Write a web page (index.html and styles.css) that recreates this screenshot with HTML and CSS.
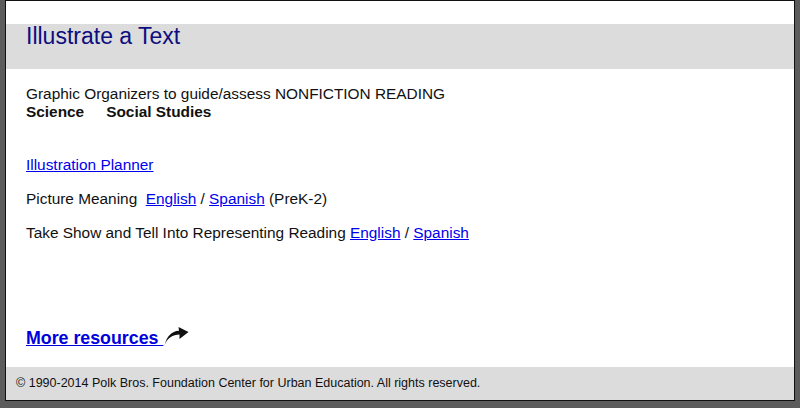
FILE: index.html
```html
<!DOCTYPE html>
<html>
<head>
<meta charset="utf-8">
<link rel="stylesheet" href="styles.css">
</head>
<body>
<div class="frame">
  <div class="top-space"></div>
  <div class="header"><h1 class="title">Illustrate a Text</h1></div>
  <div class="content">
    <div class="intro">
      <div>Graphic Organizers to guide/assess NONFICTION READING</div>
      <div class="subjects"><span class="subj">Science</span><span class="subj">Social Studies</span></div>
    </div>
    <p class="item"><a href="#">Illustration Planner</a></p>
    <p class="item">Picture Meaning&nbsp; <a href="#">English</a> / <a href="#">Spanish</a> (PreK-2)</p>
    <p class="item">Take Show and Tell Into Representing Reading <a href="#">English</a> / <a href="#">Spanish</a></p>
    <div class="more"><a href="#" class="more-link">More resources </a><svg class="arrow" width="25" height="19" viewBox="0 0 25 19"><path d="M0.5 18.5 C3 11 9 7.5 15.5 7.5 L15.5 12 L24.5 5 L14.5 0 L15 3.8 C7.5 4 2.5 10 0.5 18.5 Z" fill="#111"/></svg></div>
  </div>
  <div class="footer">© 1990-2014 Polk Bros. Foundation Center for Urban Education. All rights reserved.</div>
</div>
</body>
</html>
```
FILE: styles.css
```css
html, body {
  margin: 0;
  padding: 0;
  background: #5c5c5c;
}
body {
  font-family: "Liberation Sans", Arial, sans-serif;
  width: 800px;
  height: 408px;
  overflow: hidden;
}
.frame {
  margin-left: 5px;
  width: 788px;
  height: 399px;
  border: 1px solid #111;
  background: #fff;
  display: flex;
  flex-direction: column;
}
.top-space {
  height: 23px;
}
.header {
  height: 45px;
  background: #dcdcdc;
  padding-left: 20px;
  box-sizing: border-box;
  padding-top: 0;
}
.title {
  margin: 0;
  font-weight: normal;
  font-size: 23px;
  line-height: 24px;
  color: #0d0d80;
}
.content {
  flex: 1;
  padding: 16px 20px 0;
  font-size: 15.4px;
  line-height: 18px;
  color: #111;
}
.subjects {
  font-weight: bold;
}
.subj + .subj {
  margin-left: 22px;
}
.intro {
  margin-bottom: 35px;
}
.item {
  margin: 0 0 16px;
}
a {
  color: #0000ee;
}
.more {
  margin-top: 85px;
  display: flex;
  align-items: flex-end;
}
.more-link {
  font-weight: bold;
  font-size: 17.8px;
  line-height: 21px;
  color: #0000dd;
  white-space: pre;
}
.arrow {
  margin-bottom: 3px;
  margin-left: 1px;
}
.footer {
  height: 33px;
  background: #dcdcdc;
  font-size: 12.5px;
  line-height: 33px;
  padding-left: 10px;
  color: #111;
}
```
